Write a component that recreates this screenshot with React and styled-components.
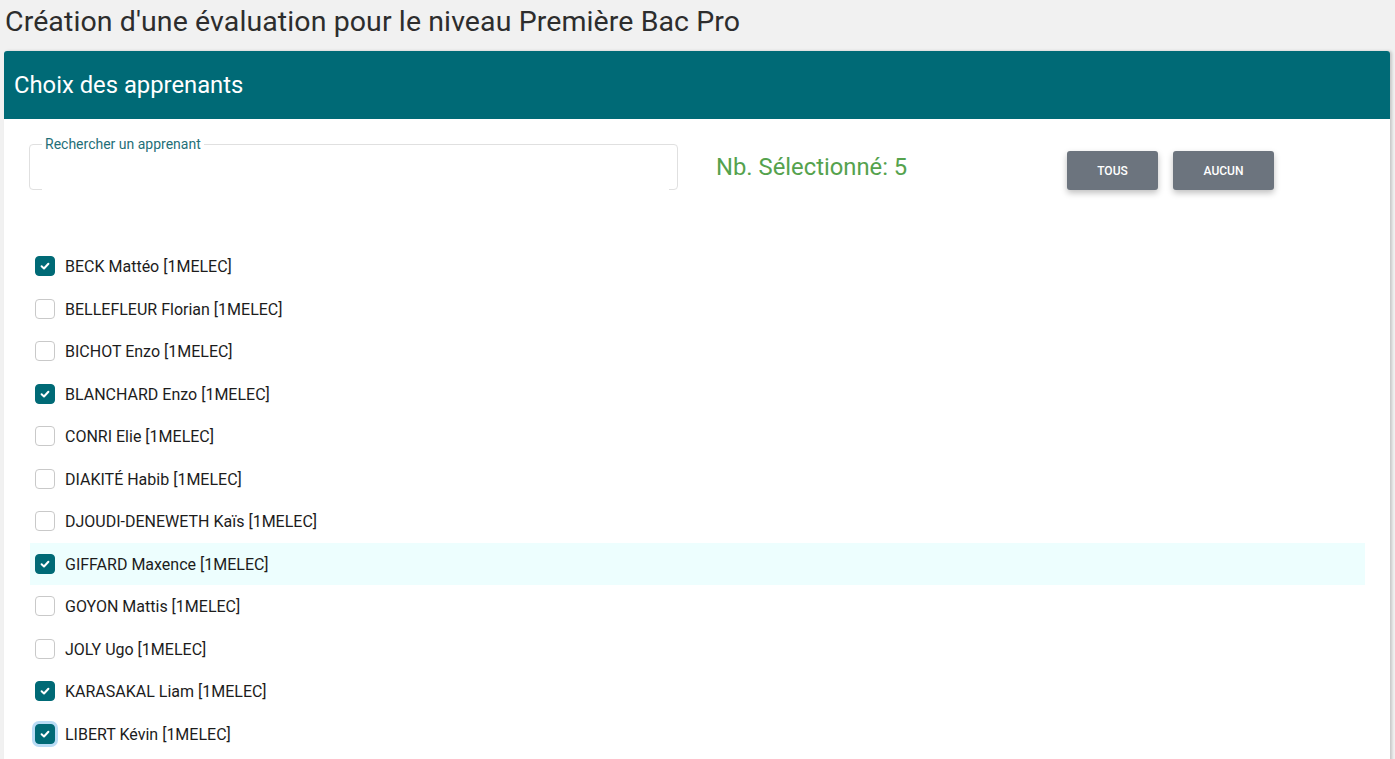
import styled, { createGlobalStyle } from "styled-components"

const students = [
    { name: "BECK Mattéo [1MELEC]", checked: true },
    { name: "BELLEFLEUR Florian [1MELEC]" },
    { name: "BICHOT Enzo [1MELEC]" },
    { name: "BLANCHARD Enzo [1MELEC]", checked: true },
    { name: "CONRI Elie [1MELEC]" },
    { name: "DIAKITÉ Habib [1MELEC]" },
    { name: "DJOUDI-DENEWETH Kaïs [1MELEC]" },
    { name: "GIFFARD Maxence [1MELEC]", checked: true, hover: true },
    { name: "GOYON Mattis [1MELEC]" },
    { name: "JOLY Ugo [1MELEC]" },
    { name: "KARASAKAL Liam [1MELEC]", checked: true },
    { name: "LIBERT Kévin [1MELEC]", checked: true, focus: true },
]

export default function App() {
    return (
        <>
            <GlobalStyle />
            <Title>Création d'une évaluation pour le niveau Première Bac Pro</Title>
            <Card>
                <CardHeader>Choix des apprenants</CardHeader>
                <CardBody>
                    <Toolbar>
                        <SearchField>
                            <legend>Rechercher un apprenant</legend>
                            <input type="text" />
                        </SearchField>
                        <Count>Nb. Sélectionné: 5</Count>
                        <Buttons>
                            <GrayBtn $w={91}>Tous</GrayBtn>
                            <GrayBtn $w={101}>Aucun</GrayBtn>
                        </Buttons>
                    </Toolbar>
                    <List>
                        {students.map((s) => (
                            <Row key={s.name} $hover={s.hover}>
                                <Box $checked={s.checked} $focus={s.focus}>
                                    {s.checked && (
                                        <svg width="12" height="12" viewBox="0 0 12 12">
                                            <path d="M2.6 6.3 L5 8.5 L9.4 3.7" fill="none" stroke="#fff" strokeWidth="2" strokeLinecap="round" strokeLinejoin="round" />
                                        </svg>
                                    )}
                                </Box>
                                <Name>{s.name}</Name>
                            </Row>
                        ))}
                    </List>
                </CardBody>
            </Card>
        </>
    )
}

const GlobalStyle = createGlobalStyle`
    html, body {
        margin: 0;
        padding: 0;
        background: #f1f1f1;
        font-family: Roboto, "Liberation Sans", sans-serif;
        overflow: hidden;
    }
`

const Title = styled.h1`
    margin: 0 0 7px;
    padding: 6px 5px;
    font-size: 28.5px;
    line-height: 32px;
    font-weight: 400;
    color: #2d2d2d;
    letter-spacing: 0.1px;
`

const Card = styled.div`
    margin: 0 5px 0 4px;
    background: #fff;
    border-radius: 3px 3px 0 0;
    box-shadow: 2px 0 3px rgba(0, 0, 0, 0.18);
    height: 720px;
`

const CardHeader = styled.div`
    background: #006a76;
    color: #fff;
    height: 68px;
    display: flex;
    align-items: center;
    padding-left: 10px;
    font-size: 23.8px;
    border-radius: 3px 3px 0 0;
`

const CardBody = styled.div`
    padding: 25px 25px 0;
`

const Toolbar = styled.div`
    display: flex;
    align-items: flex-start;
`

const SearchField = styled.fieldset`
    box-sizing: border-box;
    width: 649px;
    height: 54px;
    margin: -8px 0 0;
    padding: 0 12px;
    border: 1px solid #e0e0e0;
    border-radius: 4px;
    legend {
        padding: 0 3px;
        margin-left: 0;
        font-size: 14px;
        line-height: 16px;
        color: #1f6f78;
    }
    input {
        border: none;
        outline: none;
        width: 100%;
        height: 36px;
        font-size: 16px;
    }
`

const Count = styled.div`
    width: 351px;
    padding-left: 38px;
    margin-top: 7px;
    font-size: 23.8px;
    line-height: 32px;
    color: #55a24d;
`

const Buttons = styled.div`
    display: flex;
    gap: 15px;
    margin-top: 7px;
`

const GrayBtn = styled.button`
    width: ${(p) => p.$w}px;
    height: 39px;
    border: none;
    border-radius: 3px;
    background: #6c747e;
    color: #fff;
    font-family: Roboto, sans-serif;
    font-size: 12px;
    font-weight: 500;
    text-transform: uppercase;
    box-shadow: 0 3px 6px rgba(0, 0, 0, 0.25);
`

const List = styled.div`
    margin-top: 55px;
    width: 1335px;
    margin-left: 1px;
`

const Row = styled.div`
    height: 42.5px;
    display: flex;
    align-items: center;
    gap: 10px;
    padding-left: 5px;
    background: ${(p) => (p.$hover ? "#edfefe" : "transparent")};
`

const Box = styled.span`
    box-sizing: border-box;
    width: 20px;
    height: 20px;
    border-radius: 4px;
    display: flex;
    align-items: center;
    justify-content: center;
    background: ${(p) => (p.$checked ? "#006a76" : "#fff")};
    border: 1px solid ${(p) => (p.$checked ? "#006a76" : "#c9c9c9")};
    box-shadow: ${(p) => (p.$focus ? "0 0 0 3px #b9dcf5" : "none")};
`

const Name = styled.span`
    font-size: 16px;
    line-height: 20px;
    padding-top: 2px;
    color: #1c1c1c;
`
